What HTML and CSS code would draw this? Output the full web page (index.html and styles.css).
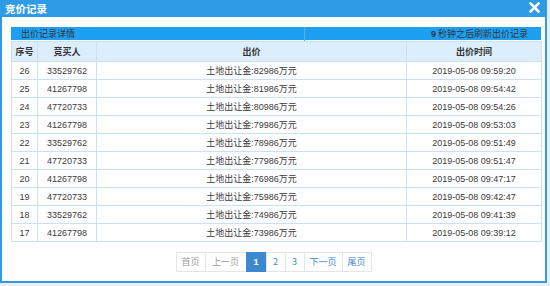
FILE: index.html
```html
<!DOCTYPE html>
<html lang="zh">
<head>
<meta charset="utf-8">
<title>竞价记录</title>
<link rel="stylesheet" href="styles.css">
</head>
<body>
<div class="dialog">
  <div class="titlebar">
    <span class="title">竞价记录</span>
    <svg class="close" width="11" height="11" viewBox="0 0 11 11"><path d="M1.5 1.5 L9.5 9.5 M9.5 1.5 L1.5 9.5" stroke="#fff" stroke-width="2.6" stroke-linecap="square"/></svg>
  </div>
  <div class="content">
    <div class="subbar">
      <span class="sub-left">出价记录详情</span>
      <span class="sub-right"><b>9</b> 秒钟之后刷新出价记录</span>
    </div>
    <table class="records">
      <colgroup>
        <col class="c1"><col class="c2"><col class="c3"><col class="c4">
      </colgroup>
      <thead>
        <tr><th>序号</th><th>竞买人</th><th>出价</th><th>出价时间</th></tr>
      </thead>
      <tbody>
        <tr><td>26</td><td>33529762</td><td>土地出让金:82986万元</td><td>2019-05-08 09:59:20</td></tr>
        <tr><td>25</td><td>41267798</td><td>土地出让金:81986万元</td><td>2019-05-08 09:54:42</td></tr>
        <tr><td>24</td><td>47720733</td><td>土地出让金:80986万元</td><td>2019-05-08 09:54:26</td></tr>
        <tr><td>23</td><td>41267798</td><td>土地出让金:79986万元</td><td>2019-05-08 09:53:03</td></tr>
        <tr><td>22</td><td>33529762</td><td>土地出让金:78986万元</td><td>2019-05-08 09:51:49</td></tr>
        <tr><td>21</td><td>47720733</td><td>土地出让金:77986万元</td><td>2019-05-08 09:51:47</td></tr>
        <tr><td>20</td><td>41267798</td><td>土地出让金:76986万元</td><td>2019-05-08 09:47:17</td></tr>
        <tr><td>19</td><td>47720733</td><td>土地出让金:75986万元</td><td>2019-05-08 09:42:47</td></tr>
        <tr><td>18</td><td>33529762</td><td>土地出让金:74986万元</td><td>2019-05-08 09:41:39</td></tr>
        <tr><td>17</td><td>41267798</td><td>土地出让金:73986万元</td><td>2019-05-08 09:39:12</td></tr>
      </tbody>
    </table>
    <div class="pager">
      <span class="pg disabled w29">首页</span>
      <span class="pg disabled w41">上一页</span>
      <span class="pg active w20">1</span>
      <span class="pg w19">2</span>
      <span class="pg w19">3</span>
      <span class="pg w38">下一页</span>
      <span class="pg w29">尾页</span>
    </div>
  </div>
</div>
</body>
</html>
```
FILE: styles.css
```css
html, body {
  margin: 0;
  padding: 0;
  background: #e9eef2;
}
body {
  font-family: "Liberation Sans", "Noto Sans CJK SC", sans-serif;
  font-size: 9px;
  color: #3a3a3a;
  width: 550px;
  height: 286px;
  overflow: hidden;
}
.dialog {
  width: 543px;
  height: 281px;
  border: 2px solid #2f9be6;
  border-top: 0;
  background: #fff;
  display: flex;
  flex-direction: column;
}
.titlebar {
  height: 17px;
  background: #2f9be6;
  display: flex;
  align-items: center;
  justify-content: space-between;
  padding: 0 4px 0 5px;
  margin: 0 -2px;
}
.title {
  color: #fff;
  font-family: "Noto Sans CJK SC", sans-serif;
  font-weight: bold;
  font-size: 10.5px;
  line-height: 17px;
}
.close {
  display: block;
  margin-top: -3px;
  margin-right: 3px;
}
.content {
  padding: 10px 4px 0 9px;
  display: flex;
  flex-direction: column;
}
.subbar {
  height: 13px;
  background: #1ea0f2;
  display: flex;
  justify-content: space-between;
  align-items: center;
  font-family: "Noto Sans CJK SC", sans-serif;
  font-size: 9px;
  color: #333;
  line-height: 13px;
  margin-bottom: 1px;
}
.sub-left {
  padding-left: 10px;
}
.sub-right {
  padding-right: 13px;
  border-left: 1px solid #4cb4f5;
  width: 223px;
  text-align: right;
}
.sub-right b {
  font-family: "Liberation Sans", sans-serif;
}
.records {
  width: 530px;
  border-collapse: collapse;
  table-layout: fixed;
}
.c1 { width: 26px; }
.c2 { width: 59px; }
.c3 { width: 310px; }
.c4 { width: 135px; }
.records th, .records td {
  border: 1px solid #c9e1f6;
  text-align: center;
  padding: 0;
  white-space: nowrap;
}
.records th {
  background: #dcedfc;
  height: 19px;
  font-family: "Noto Sans CJK SC", sans-serif;
  font-weight: bold;
  font-size: 9px;
  color: #333;
}
.records td {
  height: 17px;
  font-family: "Liberation Sans", "Noto Sans CJK SC", sans-serif;
  font-size: 9px;
}
.pager {
  display: flex;
  justify-content: center;
  margin-top: 10px;
  padding-right: 4px;
}
.pg {
  height: 18px;
  line-height: 18px;
  border: 1px solid #e2e6ea;
  margin-left: -1px;
  text-align: center;
  color: #3b8ad6;
  font-family: "Noto Sans CJK SC", sans-serif;
  font-size: 9px;
  box-sizing: content-box;
}
.pg.disabled { color: #9a9a9a; }
.pg.active {
  background: #3d89cf;
  border-color: #3d89cf;
  color: #fff;
  font-family: "Liberation Sans", sans-serif;
  font-weight: bold;
}
.w29 { width: 28px; }
.w41 { width: 40px; }
.w20 { width: 19px; }
.w19 { width: 18px; }
.w38 { width: 37px; }
```
